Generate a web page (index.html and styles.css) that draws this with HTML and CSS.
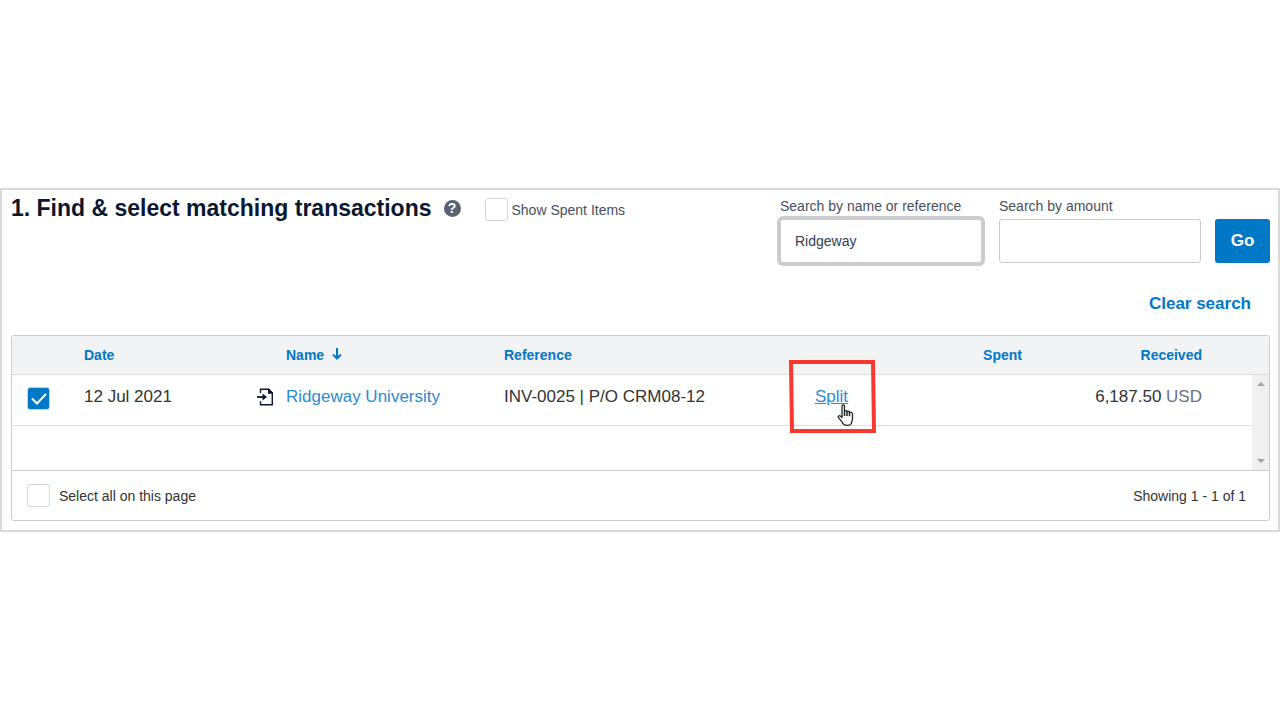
FILE: index.html
```html
<!DOCTYPE html>
<html lang="en">
<head>
  <meta charset="utf-8">
  <title>Find &amp; select matching transactions</title>
  <link rel="stylesheet" href="styles.css">
</head>
<body>
  <main class="panel">
    <div class="panel-top">
      <h1 class="title">1. Find &amp; select matching transactions</h1>
      <button class="help-btn" type="button" aria-label="Help">?</button>
      <div class="check-label spent-toggle">
        <input type="checkbox" class="checkbox" id="showSpent">
        <label for="showSpent">Show Spent Items</label>
      </div>

      <form class="search">
        <div class="field">
          <label for="searchName">Search by name or reference</label>
          <input type="text" class="text-input active" id="searchName" value="Ridgeway">
        </div>
        <div class="field">
          <label for="searchAmount">Search by amount</label>
          <input type="text" class="text-input" id="searchAmount">
        </div>
        <button class="go-btn" type="button">Go</button>
      </form>
    </div>

    <div class="clear-row">
      <a href="#" class="clear-link">Clear search</a>
    </div>

    <div class="grid">
      <table class="transactions">
        <colgroup>
          <col class="col-check">
          <col class="col-date">
          <col class="col-icon">
          <col class="col-name">
          <col class="col-reference">
          <col class="col-split">
          <col class="col-spent">
          <col class="col-received">
          <col class="col-gutter">
          <col class="col-scroll">
        </colgroup>
        <thead>
          <tr>
            <th></th>
            <th><a href="#">Date</a></th>
            <th></th>
            <th>
              <a href="#">Name
                <svg class="sort-icon" width="10" height="12" viewBox="0 0 10 12">
                  <path d="M5 0v10M1 6.500l4 4 4-4" fill="none" stroke="currentColor" stroke-width="2"/>
                </svg>
              </a>
            </th>
            <th><a href="#">Reference</a></th>
            <th></th>
            <th class="num"><a href="#">Spent</a></th>
            <th class="num"><a href="#">Received</a></th>
            <th></th>
            <th></th>
          </tr>
        </thead>
        <tbody>
          <tr class="row">
            <td class="check-cell"><input type="checkbox" class="checkbox" aria-label="Select Ridgeway University" checked></td>
            <td>12 Jul 2021</td>
            <td class="icon-cell">
              <svg width="17" height="18" viewBox="0 0 17 18">
                <path d="M3.500 5V1.200h8l3.800 3.800v11.800H3.500v-3.600" fill="none" stroke="#0a1730" stroke-width="1.400"/>
                <path d="M11 .5h.8L16 4.700v1h-5z" fill="#0a1730"/>
                <path d="M0 9h6" stroke="#0a1730" stroke-width="1.800"/>
                <path d="M5.500 5.500L10 9l-4.500 3.500z" fill="#0a1730"/>
              </svg>
            </td>
            <td><a href="#" class="name-link">Ridgeway University</a></td>
            <td>INV-0025 | P/O CRM08-12</td>
            <td class="split-cell">
              <a href="#" class="split-link">Split</a>
              <svg class="highlight" width="88" height="74" viewBox="0 0 88 74">
                <path d="M3 2h82l1 69H4z" fill="none" stroke="#fb3830" stroke-width="4"/>
              </svg>
              <svg class="pointer" width="18" height="23" viewBox="0 0 18 23">
                <path d="M5 2.200C5 .6 7.500 .6 7.500 2.200V7c.8-.6 2.300-.4 2.600.5.900-.5 2.200-.1 2.500.8 1.300-.4 2.900.3 2.900 1.700v5c0 2-1.200 2.800-1.200 4.500-1.600 2.500-6.500 2.500-8.300.2-.7-2-3.200-4.200-4.500-6-1-1.500.7-2.700 1.900-1.700L5 13.500z" fill="#fff" stroke="#222" stroke-width="1.300" stroke-linejoin="round"/>
                <path d="M7.500 6.500V12M10 7.500v4.500M12.500 8.300v4" stroke="#222" stroke-width="1.500"/>
              </svg>
            </td>
            <td class="num"></td>
            <td class="num">6,187.50 <span class="currency">USD</span></td>
            <td></td>
            <td class="scroll-cell" rowspan="2">
              <div class="scrollbar">
                <span class="arrow arrow-up"></span>
                <span class="arrow arrow-down"></span>
              </div>
            </td>
          </tr>
          <tr class="row-empty">
            <td colspan="9"></td>
          </tr>
        </tbody>
      </table>

      <div class="grid-footer">
        <div class="check-label">
          <input type="checkbox" class="checkbox" id="selectAll">
          <label for="selectAll">Select all on this page</label>
        </div>
        <div>Showing 1 - 1 of 1</div>
      </div>
    </div>
  </main>
</body>
</html>
```
FILE: styles.css
```css
* {
  box-sizing: border-box;
}

body {
  margin: 0;
  min-height: 100vh;
  display: flex;
  align-items: center;
  background: #fff;
  color: #333;
  font-family: "Liberation Sans", Arial, sans-serif;
  font-size: 14px;
  line-height: 20px;
}

a {
  color: #0078c8;
  text-decoration: none;
}

.panel {
  flex: 1;
  padding: 0 8px 9px 9px;
  border: 2px solid #d8d8d8;
}

.panel-top {
  display: flex;
  align-items: flex-start;
  padding-top: 4px;
}

.title {
  margin: 0;
  color: #0a1730;
  font-size: 23px;
  line-height: 28px;
}

.help-btn {
  width: 17px;
  height: 17px;
  margin: 6px 0 0 12px;
  padding: 0;
  border: none;
  border-radius: 50%;
  background: #5a6372;
  color: #fff;
  font-family: inherit;
  font-size: 14px;
  font-weight: bold;
  line-height: 17px;
}

.check-label {
  display: flex;
  align-items: center;
}

.spent-toggle {
  gap: 4px;
  margin: 4px 0 0 24px;
  color: #47505f;
}

.checkbox {
  appearance: none;
  width: 23px;
  height: 23px;
  margin: 0;
  border: 1px solid #d5d6d9;
  border-radius: 3px;
  background: #fff;
}

.checkbox:checked {
  border-color: #b9d8ee;
  background: #0078c8 url("data:image/svg+xml,%3Csvg xmlns='http://www.w3.org/2000/svg' viewBox='0 0 20 20'%3E%3Cpath d='M3 10.500l5 5 9-9.500' fill='none' stroke='white' stroke-width='2'/%3E%3C/svg%3E") center / 20px no-repeat;
}

.search {
  display: flex;
  align-items: flex-end;
  margin-left: auto;
  color: #47505f;
}

.field {
  display: flex;
  flex-direction: column;
  gap: 3px;
  margin: 2px 17px 0 0;
}

.field:nth-child(2) {
  margin-right: 14px;
}

.text-input {
  width: 202px;
  height: 44px;
  padding: 0 14px;
  border: 1px solid #cbccd0;
  border-radius: 3px;
  color: #333d4f;
  font-family: inherit;
  font-size: 14px;
}

.text-input.active {
  outline: none;
  box-shadow: 0 0 0 3px #cbccd0;
}

.go-btn {
  width: 55px;
  height: 44px;
  border: none;
  border-radius: 3px;
  background: #0078c8;
  color: #fff;
  font-family: inherit;
  font-size: 17px;
  font-weight: bold;
}

.clear-row {
  padding: 31px 19px 21px;
  text-align: right;
}

.clear-link {
  font-size: 17px;
  font-weight: bold;
}

.grid {
  border: 1px solid #ccc;
  border-radius: 3px;
}

.transactions {
  width: 100%;
  table-layout: fixed;
  border-collapse: separate;
  border-spacing: 0;
}

.col-check { width: 72px; }
.col-date { width: 173px; }
.col-icon { width: 29px; }
.col-name { width: 218px; }
.col-split { width: 60px; }
.col-spent { width: 147px; }
.col-received { width: 180px; }
.col-gutter { width: 50px; }
.col-scroll { width: 17px; }

th,
td {
  padding: 0;
  text-align: left;
}

th {
  height: 39px;
  border-bottom: 1px solid #ddd;
  background: #f1f3f5;
  font-size: 14px;
}

.sort-icon {
  margin-left: 4px;
}

.row td {
  height: 51px;
  padding-bottom: 6px;
  border-bottom: 1px solid #ddd;
  font-size: 17px;
}

.row .check-cell {
  padding: 0 0 4px 15px;
}

.check-cell .checkbox,
.icon-cell svg {
  display: block;
}

.row-empty td {
  height: 44px;
}

.num,
.row .num {
  text-align: right;
}

.currency {
  color: #6b7280;
}

.name-link,
.split-link {
  color: #2b8bd2;
}

.split-link {
  text-decoration: underline;
}

.split-cell {
  position: relative;
}

.highlight {
  position: absolute;
  top: -15px;
  left: -27px;
}

.pointer {
  position: absolute;
  top: 29px;
  left: 22px;
}

.row .scroll-cell {
  padding: 0;
  border: none;
  background: #f0f0f0;
}

.scrollbar {
  display: flex;
  flex-direction: column;
  justify-content: space-between;
  align-items: center;
  height: 95px;
  padding: 7px 0;
}

.arrow {
  border: 4px solid transparent;
}

.arrow-up {
  border-top: none;
  border-bottom-color: #a3a3a3;
}

.arrow-down {
  border-bottom: none;
  border-top-color: #a3a3a3;
}

.grid-footer {
  display: flex;
  justify-content: space-between;
  align-items: center;
  height: 50px;
  padding: 0 23px 0 15px;
  border-top: 1px solid #ccc;
}

.grid-footer .check-label {
  gap: 9px;
}
```
